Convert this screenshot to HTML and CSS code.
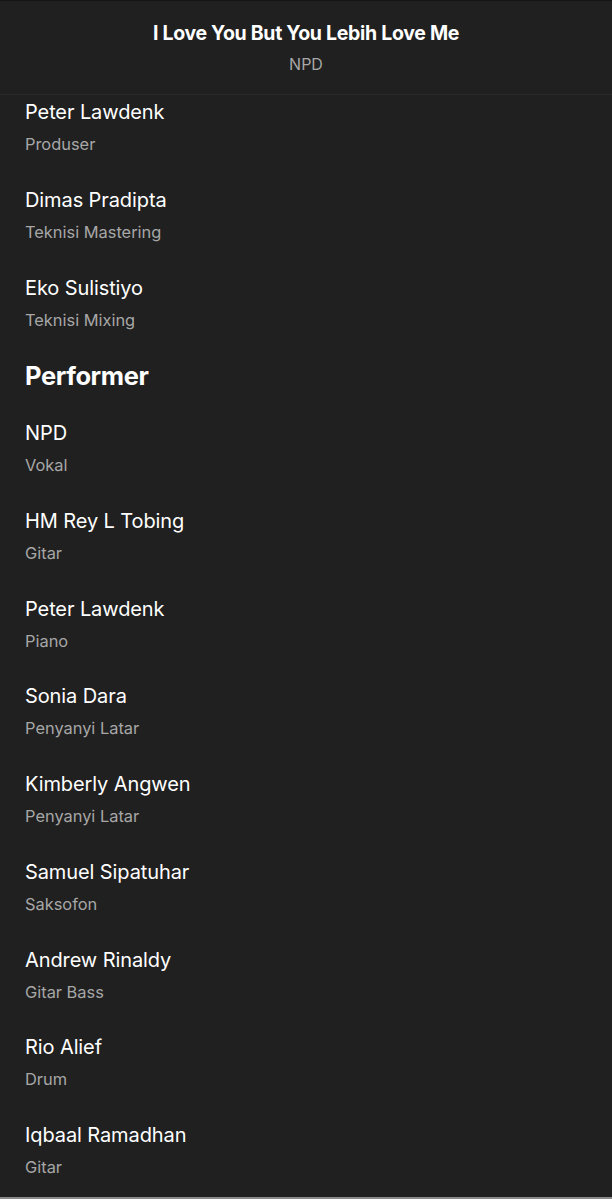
FILE: index.html
```html
<!DOCTYPE html>
<html lang="id">
<head>
    <meta charset="UTF-8">
    <meta name="viewport" content="width=device-width, initial-scale=1.0">
    <title>Kredit - I Love You But You Lebih Love Me</title>
    <link rel="stylesheet" href="styles.css">
</head>
<body>

    <div class="header">
        <div class="title">I Love You But You Lebih Love Me</div>
        <div class="artist">NPD</div>
    </div>

    <div class="credits">
        <div class="credit">
            <div class="name">Peter Lawdenk</div>
            <div class="role">Produser</div>
        </div>
        <div class="credit">
            <div class="name">Dimas Pradipta</div>
            <div class="role">Teknisi Mastering</div>
        </div>
        <div class="credit">
            <div class="name">Eko Sulistiyo</div>
            <div class="role">Teknisi Mixing</div>
        </div>

        <h2 class="section">Performer</h2>

        <div class="credit">
            <div class="name">NPD</div>
            <div class="role">Vokal</div>
        </div>
        <div class="credit">
            <div class="name">HM Rey L Tobing</div>
            <div class="role">Gitar</div>
        </div>
        <div class="credit">
            <div class="name">Peter Lawdenk</div>
            <div class="role">Piano</div>
        </div>
        <div class="credit">
            <div class="name">Sonia Dara</div>
            <div class="role">Penyanyi Latar</div>
        </div>
        <div class="credit">
            <div class="name">Kimberly Angwen</div>
            <div class="role">Penyanyi Latar</div>
        </div>
        <div class="credit">
            <div class="name">Samuel Sipatuhar</div>
            <div class="role">Saksofon</div>
        </div>
        <div class="credit">
            <div class="name">Andrew Rinaldy</div>
            <div class="role">Gitar Bass</div>
        </div>
        <div class="credit">
            <div class="name">Rio Alief</div>
            <div class="role">Drum</div>
        </div>
        <div class="credit">
            <div class="name">Iqbaal Ramadhan</div>
            <div class="role">Gitar</div>
        </div>
    </div>

</body>
</html>
```

FILE: styles.css
```css
html {
    background-color: #202020;
}
body {
    font-family: Inter, "Noto Sans", sans-serif;
    margin: 0;
    height: 1199px;
    box-sizing: border-box;
    background-color: #202020;
    color: #fff;
    border-top: 1px solid #151515;
    border-bottom: 2px solid #8a8a8a;
    overflow: hidden;
}
.header {
    height: 94px;
    box-sizing: border-box;
    border-bottom: 1px solid #2a2a2a;
    text-align: center;
    padding-top: 20px;
}
.title {
    font-size: 19.5px;
    font-weight: 700;
    line-height: 24px;
    letter-spacing: -0.3px;
}
.artist {
    margin-top: 9px;
    font-size: 16px;
    line-height: 20px;
    color: #a7a7a7;
}
.credits {
    display: flex;
    flex-direction: column;
    gap: 32.75px;
    padding: 5px 25px 0;
}
.name {
    font-size: 20px;
    line-height: 24px;
    letter-spacing: -0.1px;
}
.role {
    margin-top: 10px;
    font-size: 16.4px;
    line-height: 21px;
    color: #a7a7a7;
}
.section {
    margin: 0;
    font-size: 25.5px;
    line-height: 25px;
    font-weight: 700;
    letter-spacing: -0.4px;
}
```
